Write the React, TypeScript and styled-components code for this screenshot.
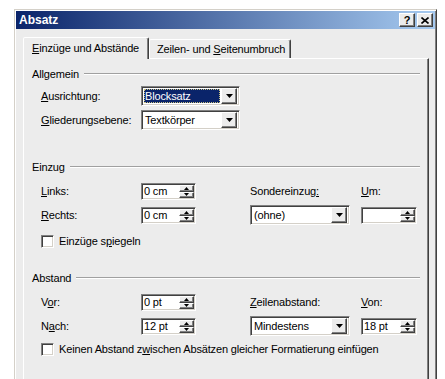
import React from "react";
import styled, { createGlobalStyle } from "styled-components";

const FACE = "#ececec";

const GlobalStyle = createGlobalStyle`
	html, body {
		margin: 0;
		height: 100%;
		overflow: hidden;
		background: #fff;
	}

	body {
		font-family: "Liberation Sans", Arial, sans-serif;
		font-size: 11px;
		letter-spacing: -0.15px;
		color: #000;
	}
`;

const Dialog = styled.div`
	box-sizing: border-box;
	margin: 9px 0 0 14px;
	width: 423px;
	height: 400px;
	padding: 1px;
	background: ${FACE};
	border: 1px solid;
	border-color: #d4d0c8 #404040 #404040 #d4d0c8;
	box-shadow: inset 1px 1px 0 #fff, inset -1px -1px 0 #808080;
`;

const TitleBar = styled.div`
	display: flex;
	align-items: center;
	justify-content: space-between;
	height: 18px;
	padding: 0 2px 0 3px;
	background: linear-gradient(to right, #0a246a, #a6caf0);
`;

const Title = styled.span`
	color: #fff;
	font-weight: bold;
	font-size: 12px;
	letter-spacing: 0;
`;

const TitleButtons = styled.div`
	display: flex;
	gap: 2px;
`;

const TitleButton = styled.div`
	box-sizing: border-box;
	width: 16px;
	height: 14px;
	display: flex;
	align-items: center;
	justify-content: center;
	background: ${FACE};
	border: 1px solid;
	border-color: #fff #404040 #404040 #fff;
	box-shadow: inset -1px -1px 0 #808080;
	font-weight: bold;
	font-size: 11px;
	line-height: 1;
`;

const Body = styled.div`
	padding: 8px 6px 0 7px;
`;

const TabRow = styled.div`
	position: relative;
	z-index: 1;
	display: flex;
	align-items: flex-end;
	height: 21px;
`;

const Tab = styled.div<{ $active?: boolean; $width: number }>`
	box-sizing: border-box;
	width: ${(p) => p.$width}px;
	height: ${(p) => (p.$active ? 22 : 19)}px;
	margin-bottom: ${(p) => (p.$active ? -1 : 0)}px;
	padding: ${(p) => (p.$active ? "0 0 1px 8px" : "0 0 0 7px")};
	display: flex;
	align-items: center;
	background: ${FACE};
	border: 1px solid;
	border-bottom: none;
	border-color: #fff #404040 transparent #fff;
	border-radius: 2px 2px 0 0;
	box-shadow: inset -1px 0 0 #808080;
	white-space: nowrap;
`;

const Panel = styled.div`
	box-sizing: border-box;
	height: 340px;
	padding: 8px 8px 0;
	border: 1px solid;
	border-color: #fff #404040 #404040 #fff;
	box-shadow: inset -1px -1px 0 #808080;
`;

const Group = styled.section<{ $top: number }>`
	margin-top: ${(p) => p.$top}px;
`;

const GroupHead = styled.div`
	display: flex;
	align-items: center;
	gap: 5px;
	height: 14px;

	&::after {
		content: "";
		flex: 1;
		border-top: 1px solid #a0a0a0;
		border-bottom: 1px solid #fff;
	}
`;

const Row = styled.div<{ $top?: number }>`
	display: grid;
	grid-template-columns: 100px 109px 111px 56px;
	align-items: center;
	height: 24px;
	margin-top: ${(p) => p.$top ?? 0}px;
	padding-left: 9px;
`;

const CheckRow = styled.label<{ $top: number }>`
	display: flex;
	align-items: center;
	gap: 5px;
	height: 20px;
	margin-top: ${(p) => p.$top}px;
	padding-left: 9px;
`;

const CheckBox = styled.span`
	box-sizing: border-box;
	width: 13px;
	height: 13px;
	background: #fff;
	border: 1px solid;
	border-color: #808080 #fff #fff #808080;
	box-shadow: inset 1px 1px 0 #404040, inset -1px -1px 0 #d4d0c8;
`;

const Sunken = styled.div<{ $width: number; $height: number }>`
	box-sizing: border-box;
	width: ${(p) => p.$width}px;
	height: ${(p) => p.$height}px;
	display: flex;
	align-items: center;
	background: #fff;
	border: 1px solid;
	border-color: #808080 #fff #fff #808080;
	box-shadow: inset 1px 1px 0 #404040, inset -1px -1px 0 #d4d0c8;
`;

const Value = styled.span<{ $selected?: boolean }>`
	flex: 1;
	align-self: stretch;
	display: flex;
	align-items: center;
	margin: 2px 1px 2px 2px;
	padding-left: 1px;
	white-space: nowrap;
	${(p) =>
		p.$selected &&
		`
		background: #0a246a;
		color: #fff;
		outline: 1px dotted #c8c080;
		outline-offset: -1px;
	`}
`;

const SpinValue = styled.span`
	flex: 1;
	padding-left: 2px;
	white-space: nowrap;
`;

const RaisedButton = styled.div<{ $w: number; $h: number }>`
	box-sizing: border-box;
	width: ${(p) => p.$w}px;
	height: ${(p) => p.$h}px;
	display: flex;
	align-items: center;
	justify-content: center;
	background: ${FACE};
	border: 1px solid;
	border-color: #fff #404040 #404040 #fff;
	box-shadow: inset -1px -1px 0 #808080;
`;

const DropWrap = styled.div`
	margin-right: 2px;
`;

const SpinButtons = styled.div`
	display: flex;
	flex-direction: column;
	margin-right: 1px;
`;

const Arrow = ({ up, size = 3 }: { up?: boolean; size?: number }) => (
	<svg width={size * 2 + 1} height={size + 1} viewBox={`0 0 ${size * 2 + 1} ${size + 1}`}>
		<polygon
			points={
				up
					? `${size + 0.5},0 ${size * 2 + 1},${size + 1} 0,${size + 1}`
					: `0,0 ${size * 2 + 1},0 ${size + 0.5},${size + 1}`
			}
			fill="#000"
		/>
	</svg>
);

const Select = ({
	value,
	width,
	selected
}: {
	value: string;
	width: number;
	selected?: boolean;
}) => (
	<Sunken $width={width} $height={20}>
		<Value $selected={selected}>{value}</Value>
		<DropWrap>
			<RaisedButton $w={16} $h={16}>
				<Arrow size={3} />
			</RaisedButton>
		</DropWrap>
	</Sunken>
);

const Spinner = ({ value, width = 55 }: { value: string; width?: number }) => (
	<Sunken $width={width} $height={17}>
		<SpinValue>{value}</SpinValue>
		<SpinButtons>
			<RaisedButton $w={15} $h={7}>
				<Arrow up size={2} />
			</RaisedButton>
			<RaisedButton $w={15} $h={6}>
				<Arrow size={2} />
			</RaisedButton>
		</SpinButtons>
	</Sunken>
);

const CloseGlyph = () => (
	<svg width="8" height="7" viewBox="0 0 8 7">
		<path d="M0.5 0.5 L7.5 6.5 M7.5 0.5 L0.5 6.5" stroke="#000" strokeWidth="1.6" />
	</svg>
);

const App: React.FC = () => (
	<>
		<GlobalStyle />
		<Dialog>
			<TitleBar>
				<Title>Absatz</Title>
				<TitleButtons>
					<TitleButton>?</TitleButton>
					<TitleButton>
						<CloseGlyph />
					</TitleButton>
				</TitleButtons>
			</TitleBar>
			<Body>
				<TabRow>
					<Tab $active $width={126}>
						<span>
							<u>E</u>inzüge und Abstände
						</span>
					</Tab>
					<Tab $width={142}>
						<span>
							Zeilen- und <u>S</u>eitenumbruch
						</span>
					</Tab>
				</TabRow>
				<Panel>
					<Group $top={0}>
						<GroupHead>Allgemein</GroupHead>
						<Row $top={3}>
							<span>
								<u>A</u>usrichtung:
							</span>
							<Select value="Blocksatz" width={99} selected />
						</Row>
						<Row>
							<span>
								<u>G</u>liederungsebene:
							</span>
							<Select value="Textkörper" width={99} />
						</Row>
					</Group>

					<Group $top={28}>
						<GroupHead>Einzug</GroupHead>
						<Row $top={5}>
							<span>
								<u>L</u>inks:
							</span>
							<Spinner value="0 cm" />
							<span>
								Sondereinzug<u>:</u>
							</span>
							<span>
								<u>U</u>m:
							</span>
						</Row>
						<Row>
							<span>
								<u>R</u>echts:
							</span>
							<Spinner value="0 cm" />
							<Select value="(ohne)" width={100} />
							<Spinner value="" width={56} />
						</Row>
						<CheckRow $top={4}>
							<CheckBox />
							<span>
								Einzüge s<u>p</u>iegeln
							</span>
						</CheckRow>
					</Group>

					<Group $top={20}>
						<GroupHead>Abstand</GroupHead>
						<Row $top={5}>
							<span>
								V<u>o</u>r:
							</span>
							<Spinner value="0 pt" />
							<span>
								<u>Z</u>eilenabstand:
							</span>
							<span>
								<u>V</u>on:
							</span>
						</Row>
						<Row>
							<span>
								N<u>a</u>ch:
							</span>
							<Spinner value="12 pt" />
							<Select value="Mindestens" width={100} />
							<Spinner value="18 pt" width={56} />
						</Row>
						<CheckRow $top={1}>
							<CheckBox />
							<span>
								Keinen Abstand z<u>w</u>ischen Absätzen gleicher Formatierung einfügen
							</span>
						</CheckRow>
					</Group>
				</Panel>
			</Body>
		</Dialog>
	</>
);

export default App;
